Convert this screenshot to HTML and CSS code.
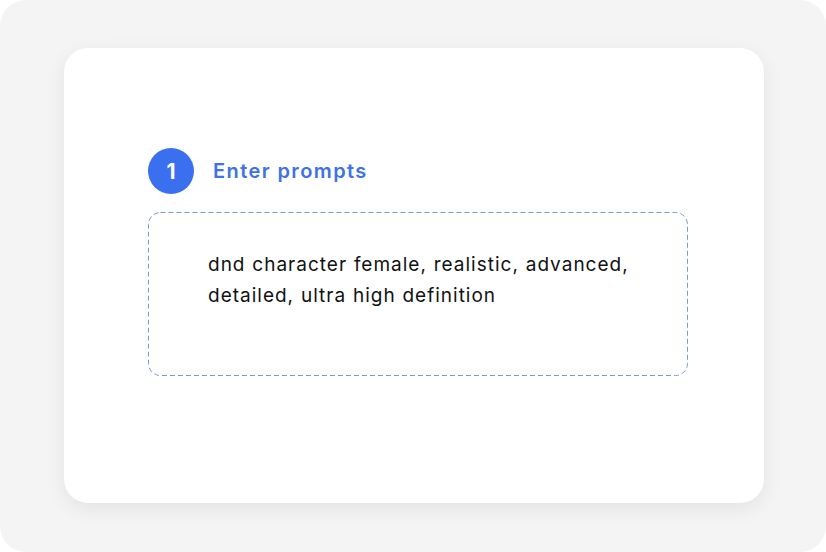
FILE: index.html
```html
<!DOCTYPE html>
<html>
<head>
<meta charset="utf-8">
<link rel="stylesheet" href="styles.css">
</head>
<body>
<div class="frame">
  <div class="card">
    <div class="step">
      <div class="badge">1</div>
      <div class="step-title">Enter prompts</div>
    </div>
    <div class="prompt-box">
      <svg class="dash" width="540" height="164" viewBox="0 0 540 164" aria-hidden="true">
        <rect x="0.5" y="0.5" width="539" height="163" rx="12" ry="12" fill="none" stroke="#7d99c9" stroke-width="1" stroke-dasharray="5 3"/>
      </svg>
      <p class="prompt-text">dnd character female, realistic, advanced,<br>detailed, ultra high definition</p>
    </div>
  </div>
</div>
</body>
</html>
```
FILE: styles.css
```css
html, body {
  margin: 0;
  padding: 0;
  background: #ffffff;
}
body {
  width: 826px;
  height: 552px;
  font-family: Inter, "Noto Sans", sans-serif;
}
.frame {
  width: 826px;
  height: 552px;
  box-sizing: border-box;
  background: #f4f4f4;
  border-radius: 26px;
  padding: 48px 62px 49px 64px;
}
.card {
  height: 100%;
  box-sizing: border-box;
  background: #ffffff;
  border-radius: 24px;
  box-shadow: 0 6px 20px rgba(0,0,0,0.07);
  padding: 100px 76px 0 84px;
}
.step {
  display: flex;
  align-items: center;
  gap: 19px;
  height: 46px;
}
.badge {
  width: 46px;
  height: 46px;
  border-radius: 50%;
  background: #3a6ff0;
  color: #fff;
  display: flex;
  align-items: center;
  justify-content: center;
  font-size: 21px;
  font-weight: 700;
}
.step-title {
  color: #3d73e6;
  font-size: 20px;
  font-weight: 600;
  letter-spacing: 1.4px;
}
.prompt-box {
  position: relative;
  margin-top: 18px;
  width: 540px;
  height: 164px;
  box-sizing: border-box;
  padding: 37px 20px 0 60px;
}
.dash {
  position: absolute;
  top: 0;
  left: 0;
}
.prompt-text {
  position: relative;
  margin: 0;
  font-size: 19px;
  line-height: 31px;
  color: #111;
  letter-spacing: 1px;
  word-spacing: 0.5px;
  white-space: nowrap;
}
```
